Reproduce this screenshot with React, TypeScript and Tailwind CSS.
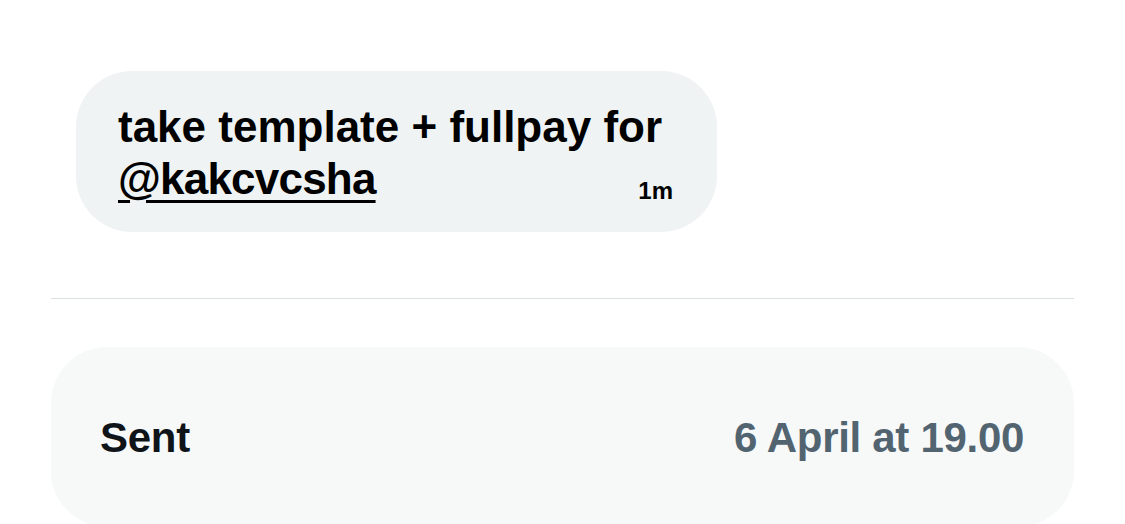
import React from 'react';

const font = { fontFamily: '"Liberation Sans", Arial, sans-serif' };

export default function App() {
  return (
    <div className="w-[1125px] h-[524px] overflow-hidden bg-white" style={font}>
      {/* Message bubble */}
      <div className="pt-[71px] pl-[76px]">
        <div className="w-[641px] h-[161px] rounded-[56px] bg-[#eff3f4] pl-[42px] pr-[44px] pt-[30px]">
          <p className="text-[44px] leading-[52px] font-bold text-black whitespace-nowrap">
            take template + fullpay for
          </p>
          <div className="flex items-end justify-between">
            <span className="text-[44px] leading-[52px] font-bold text-black underline decoration-[3px] underline-offset-[6px] tracking-[-0.8px]">
              @kakcvcsha
            </span>
            <span className="text-[24px] leading-[24px] font-bold text-black mb-[2px]">1m</span>
          </div>
        </div>
      </div>

      {/* Divider */}
      <div className="mx-[51px] mt-[66px] border-t border-[#d9dee1]" />

      {/* Sent info */}
      <div className="mx-[51px] mt-[48px] h-[180px] rounded-[56px] bg-[#f7f9f9] flex items-center justify-between pl-[49px] pr-[50px]">
        <span className="text-[42px] font-bold text-[#0f1419] tracking-[-0.3px]">Sent</span>
        <span className="text-[42px] font-bold text-[#536471] tracking-[-0.3px]">6 April at 19.00</span>
      </div>
    </div>
  );
}
